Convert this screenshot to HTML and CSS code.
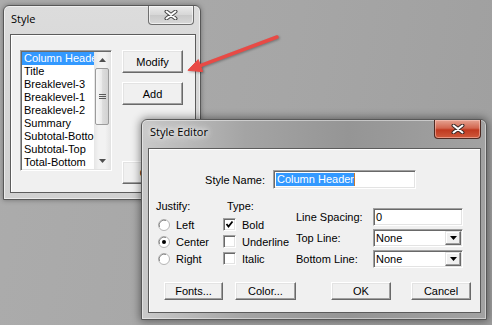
FILE: index.html
```html
<!DOCTYPE html>
<html lang="en">
<head>
<meta charset="utf-8">
<title>Style Editor</title>
<link rel="stylesheet" href="styles.css">
</head>
<body>
<div class="desk">
  <div class="win win-style">
    <div class="titlebar">
      <span class="title">Style</span>
      <div class="close close-inactive">
        <svg width="14" height="10" viewBox="0 0 14 10"><path d="M2.5 1.5 L11.5 8.5 M11.5 1.5 L2.5 8.5" stroke="#4a4a4a" stroke-width="4" stroke-linecap="round"/><path d="M2.5 1.5 L11.5 8.5 M11.5 1.5 L2.5 8.5" stroke="#fff" stroke-width="2" stroke-linecap="round"/></svg>
      </div>
    </div>
    <div class="client style-client">
      <div class="listbox">
        <ul class="items">
          <li class="sel">Column Header</li>
          <li>Title</li>
          <li>Breaklevel-3</li>
          <li>Breaklevel-1</li>
          <li>Breaklevel-2</li>
          <li>Summary</li>
          <li>Subtotal-Bottom</li>
          <li>Subtotal-Top</li>
          <li>Total-Bottom</li>
        </ul>
        <div class="vscroll">
          <div class="sb-arrow"><svg width="7" height="4" viewBox="0 0 7 4"><path d="M0 4 L3.5 0 L7 4 Z" fill="#4f4f4f"/></svg></div>
          <div class="thumb"><svg width="7" height="6" viewBox="0 0 7 6"><path d="M0 .5H7M0 2.5H7M0 4.5H7" stroke="#5a5a5a"/></svg></div>
          <div class="track"></div>
          <div class="sb-arrow"><svg width="7" height="4" viewBox="0 0 7 4"><path d="M0 0 L3.5 4 L7 0 Z" fill="#4f4f4f"/></svg></div>
        </div>
      </div>
      <div class="btn-col">
        <button class="btn btn-tall">Modify</button>
        <button class="btn btn-tall">Add</button>
        <button class="btn btn-tall btn-third">Copy</button>
      </div>
    </div>
  </div>

  <div class="win win-editor">
    <div class="titlebar">
      <span class="title title-glow">Style Editor</span>
      <div class="close close-active">
        <svg width="14" height="10" viewBox="0 0 14 10"><path d="M2.5 1.5 L11.5 8.5 M11.5 1.5 L2.5 8.5" stroke="#3b2a28" stroke-width="4" stroke-linecap="round"/><path d="M2.5 1.5 L11.5 8.5 M11.5 1.5 L2.5 8.5" stroke="#fff" stroke-width="2" stroke-linecap="round"/></svg>
      </div>
    </div>
    <div class="client editor-client">
      <div class="row-name">
        <label class="name-label">Style Name:</label>
        <div class="textbox name-box"><span class="selected">Column Header</span></div>
      </div>
      <div class="main">
        <div class="col col-justify">
          <div class="heading">Justify:</div>
          <div class="opt">
            <svg class="radio" width="12" height="12" viewBox="0 0 12 12"><circle cx="6" cy="6" r="5.5" fill="#fff" stroke="#b4b4b4"/><path d="M1.5 8 A5 5 0 0 1 8 1.5" fill="none" stroke="#8a8a8a"/></svg>
            <span>Left</span>
          </div>
          <div class="opt">
            <svg class="radio" width="12" height="12" viewBox="0 0 12 12"><circle cx="6" cy="6" r="5.5" fill="#fff" stroke="#b4b4b4"/><path d="M1.5 8 A5 5 0 0 1 8 1.5" fill="none" stroke="#8a8a8a"/><circle cx="6" cy="6" r="2" fill="#000"/></svg>
            <span>Center</span>
          </div>
          <div class="opt">
            <svg class="radio" width="12" height="12" viewBox="0 0 12 12"><circle cx="6" cy="6" r="5.5" fill="#fff" stroke="#b4b4b4"/><path d="M1.5 8 A5 5 0 0 1 8 1.5" fill="none" stroke="#8a8a8a"/></svg>
            <span>Right</span>
          </div>
        </div>
        <div class="col col-type">
          <div class="heading heading-type">Type:</div>
          <div class="opt">
            <span class="check"><svg width="9" height="9" viewBox="0 0 9 9"><path d="M1.5 4 L3.5 6.5 L7.5 1.5" fill="none" stroke="#000" stroke-width="1.8"/></svg></span>
            <span>Bold</span>
          </div>
          <div class="opt">
            <span class="check"></span>
            <span>Underline</span>
          </div>
          <div class="opt">
            <span class="check"></span>
            <span>Italic</span>
          </div>
        </div>
        <div class="col-right">
          <label class="field-label">Line Spacing:</label>
          <div class="textbox"><span class="val">0</span></div>
          <label class="field-label">Top Line:</label>
          <div class="textbox combo"><span class="val">None</span><span class="dd"><svg width="7" height="4" viewBox="0 0 7 4"><path d="M0 0 L3.5 4 L7 0 Z" fill="#000"/></svg></span></div>
          <label class="field-label">Bottom Line:</label>
          <div class="textbox combo"><span class="val">None</span><span class="dd"><svg width="7" height="4" viewBox="0 0 7 4"><path d="M0 0 L3.5 4 L7 0 Z" fill="#000"/></svg></span></div>
        </div>
      </div>
      <div class="btn-row">
        <button class="btn b-fonts">Fonts...</button>
        <button class="btn b-color">Color...</button>
        <button class="btn b-ok">OK</button>
        <button class="btn b-cancel">Cancel</button>
      </div>
    </div>
  </div>

  <svg class="arrow" width="492" height="325" viewBox="0 0 492 325">
    <path d="M277 37 L197 66.8" stroke="#e84a45" stroke-width="3.5" stroke-linecap="round"/>
    <path d="M188 70.3 L202.6 71.6 L198.2 59.6 Z" fill="#e84a45" stroke="#e84a45" stroke-width="1" stroke-linejoin="round"/>
  </svg>
</div>
</body>
</html>
```

FILE: styles.css
```css
* { box-sizing: border-box; margin: 0; padding: 0; }

html, body { width: 492px; height: 325px; overflow: hidden; }

body {
  font-family: "Liberation Sans", Arial, sans-serif;
  font-size: 11px;
  color: #000;
  background: #a8a8a8;
}

.desk {
  position: relative;
  width: 492px;
  height: 325px;
  background: linear-gradient(100deg, #acacac 0%, #a6a6a6 55%, #9f9f9f 100%);
}

/* ---------- window frames ---------- */
.win {
  position: absolute;
  display: flex;
  flex-direction: column;
  border: 1px solid #585858;
  border-radius: 6px 6px 0 0;
}

.win-style {
  left: 3px;
  top: 5px;
  width: 198px;
  height: 195px;
  padding: 0 4px 6px 6px;
  background: linear-gradient(#dcdcdc, #d0d0d0);
  box-shadow: 0 0 5px rgba(0, 0, 0, .35), inset 0 0 0 1px rgba(255, 255, 255, .55);
}

.win-editor {
  left: 141px;
  top: 119px;
  width: 346px;
  height: 201px;
  padding: 0 5px 6px 6px;
  background: linear-gradient(90deg, #c9c9c9 0%, #a4a4a4 30%, #959595 60%, #a2a2a2 100%);
  box-shadow: 0 0 9px 1px rgba(0, 0, 0, .45), inset 0 0 0 1px rgba(255, 255, 255, .45);
}

.titlebar {
  height: 28px;
  display: flex;
  justify-content: space-between;
  align-items: flex-start;
  flex: none;
}

.title {
  font-family: "Open Sans", "Noto Sans", sans-serif;
  font-size: 11px;
  line-height: 15px;
  padding-top: 5px;
  padding-left: 1px;
}

.title-glow {
  padding-top: 4px;
  padding-left: 2px;
  text-shadow: 0 0 5px #fff, 0 0 9px #fff, 0 0 14px rgba(255, 255, 255, .9);
}

.close {
  width: 46px;
  height: 19px;
  border: 1px solid #6f6f6f;
  border-top: none;
  border-radius: 0 0 4px 4px;
  display: flex;
  align-items: center;
  justify-content: center;
}

.close-inactive {
  margin-right: 2px;
  background: linear-gradient(#ebebeb, #d6d6d6 50%, #c9c9c9 51%, #d8d8d8);
  box-shadow: inset 0 0 0 1px rgba(255, 255, 255, .6);
}

.close-active {
  width: 47px;
  border-color: #4e2a22;
  background: linear-gradient(#e6a392, #d2664f 45%, #c0391f 55%, #cf5a3c);
  box-shadow: inset 0 0 0 1px rgba(255, 210, 200, .5);
}

/* ---------- client areas ---------- */
.client {
  flex: 1;
  background: #f0f0f0;
  border: 1px solid #5c5c5c;
  box-shadow: inset 1px 1px 0 #ffffff;
}

.style-client {
  display: flex;
  align-items: flex-start;
  padding: 15px 0 0 9px;
}

/* listbox */
.listbox {
  width: 92px;
  height: 121px;
  display: flex;
  padding: 1px;
  background: #fff;
  border: 1px solid;
  border-color: #a0a0a0 #ffffff #ffffff #a0a0a0;
  box-shadow: inset 1px 1px 0 #696969, inset -1px -1px 0 #e3e3e3;
}

.items {
  list-style: none;
  width: 72px;
  overflow: hidden;
}

.items li {
  height: 13px;
  line-height: 13px;
  padding-left: 2px;
  white-space: nowrap;
  overflow: hidden;
}

.items li.sel {
  background: #3399ff;
  color: #fff;
}

.vscroll {
  width: 16px;
  display: flex;
  flex-direction: column;
  background: linear-gradient(90deg, #e6e6e6, #f2f2f2 30%, #f2f2f2 70%, #e6e6e6);
}

.sb-arrow {
  height: 16px;
  flex: none;
  display: flex;
  align-items: center;
  justify-content: center;
}

.thumb {
  height: 57px;
  margin: 0 1px;
  flex: none;
  border: 1px solid #9b9b9b;
  border-radius: 2px;
  background: linear-gradient(90deg, #f7f7f7, #ececec 45%, #dcdcdc 55%, #d2d2d2);
  display: flex;
  align-items: center;
  justify-content: center;
}

.track { flex: 1; }

/* buttons */
.btn {
  font: inherit;
  color: #000;
  background: #f0f0f0;
  border: 1px solid;
  border-color: #ffffff #696969 #696969 #ffffff;
  box-shadow: inset -1px -1px 0 #a0a0a0, inset 1px 1px 0 #e3e3e3;
  display: flex;
  align-items: center;
  justify-content: center;
}

.btn-col {
  display: flex;
  flex-direction: column;
  gap: 9px;
  margin-left: 10px;
}

.btn-tall {
  width: 61px;
  height: 23px;
}

.btn-third { margin-top: 47px; }

/* ---------- editor ---------- */
.editor-client {
  display: flex;
  flex-direction: column;
  padding-top: 21px;
}

.row-name {
  display: flex;
  align-items: center;
  height: 19px;
}

.name-label {
  width: 116px;
  text-align: right;
  margin-right: 8px;
}

.textbox {
  height: 100%;
  background: #fff;
  border: 1px solid;
  border-color: #a0a0a0 #ffffff #ffffff #a0a0a0;
  box-shadow: inset 1px 1px 0 #696969, inset -1px -1px 0 #e3e3e3;
  display: flex;
  align-items: center;
  padding: 1px 1px 1px 2px;
}

.name-box {
  width: 143px;
  height: 19px;
}

.selected {
  background: #3399ff;
  color: #fff;
  line-height: 13px;
  padding: 0 0 0 1px;
  border-right: 1px solid #c8782f;
  margin-left: 0;
}

.main {
  display: flex;
  margin-top: 10px;
}

.col {
  display: flex;
  flex-direction: column;
}

.col-justify {
  width: 74px;
  padding-left: 7px;
}

.col-type {
  width: 73px;
}

.heading {
  height: 14px;
  line-height: 14px;
  margin-bottom: 3px;
}

.heading-type { padding-left: 4px; }

.opt {
  height: 17px;
  display: flex;
  align-items: center;
}

.radio {
  margin-left: 2px;
  margin-right: 6px;
  flex: none;
}

.check {
  width: 13px;
  height: 13px;
  flex: none;
  margin-right: 6px;
  background: #fff;
  border: 1px solid;
  border-color: #a0a0a0 #ffffff #ffffff #a0a0a0;
  box-shadow: inset 1px 1px 0 #696969, inset -1px -1px 0 #e3e3e3;
  display: flex;
  align-items: center;
  justify-content: center;
}

.col-right {
  margin-top: 9px;
  display: grid;
  grid-template-columns: 77px 90px;
  grid-auto-rows: 18px;
  row-gap: 3px;
  align-items: center;
}

.col-right .textbox { height: 18px; }

.combo { justify-content: space-between; padding-right: 1px; }

.dd {
  width: 16px;
  height: 14px;
  background: #f0f0f0;
  border: 1px solid;
  border-color: #e3e3e3 #696969 #696969 #e3e3e3;
  box-shadow: inset -1px -1px 0 #a0a0a0, inset 1px 1px 0 #ffffff;
  display: flex;
  align-items: center;
  justify-content: center;
}

.btn-row {
  display: flex;
  margin-top: 14px;
  padding-left: 15px;
  height: 18px;
}

.btn-row .btn { height: 18px; }

.b-fonts { width: 59px; }
.b-color { width: 61px; margin-left: 12px; }
.b-ok { width: 60px; margin-left: 35px; }
.b-cancel { width: 60px; margin-left: 20px; }

/* ---------- annotation arrow ---------- */
.arrow {
  position: absolute;
  left: 0;
  top: 0;
  pointer-events: none;
  filter: drop-shadow(1px 1px 1px rgba(0, 0, 0, .3));
}
```
